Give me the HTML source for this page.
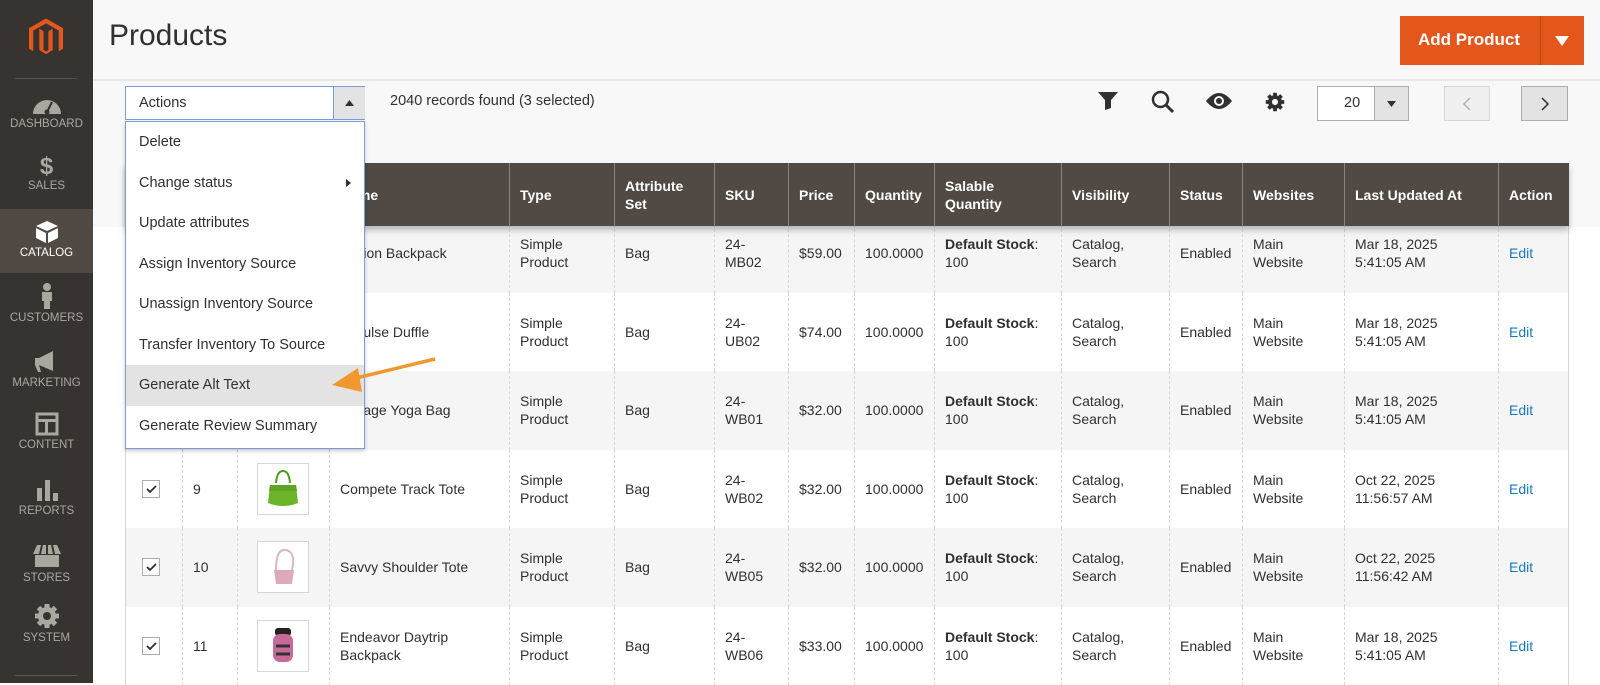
<!DOCTYPE html>
<html><head><meta charset="utf-8">
<style>
*{box-sizing:border-box;margin:0;padding:0}
body{width:1600px;height:683px;overflow:hidden;background:#fff;font-family:"Liberation Sans",sans-serif;color:#303030;position:relative;font-size:14px}
.side{position:absolute;left:0;top:0;width:93px;height:683px;background:#373330;z-index:5}
.side .sep{position:absolute;left:15px;width:62px;height:1px;background:#5a5450}
.nav{position:absolute;left:0;width:93px;text-align:center;color:#aaa6a0;font-size:11.5px;letter-spacing:0}
.nav svg{display:block;margin:0 auto 3px}
.nav.act{background:#514943;color:#fff}
.top{position:absolute;left:93px;top:0;width:1507px;height:227px;background:#f8f8f8}
.top .line{position:absolute;left:0;top:79px;width:100%;height:2px;background:#e8e8e8}
h1{position:absolute;left:109px;top:19px;font-size:30px;font-weight:normal;color:#303030}
.addbtn{position:absolute;left:1400px;top:16px;width:184px;height:49px;background:#e3571c;color:#fff;font-weight:bold;font-size:17px}
.addbtn span{position:absolute;left:18px;top:14px}
.addbtn i{position:absolute;left:140px;top:0;width:1px;height:49px;background:#b84510}
.sel{position:absolute;background:#fff;border:1px solid #adadad}
.abs{position:absolute}
table{border-collapse:collapse;table-layout:fixed;position:absolute;left:125px;width:1443px}
td,th{text-align:left;vertical-align:middle;padding:0 10px;line-height:18px;font-size:14px}
thead th{background:#514943;color:#fff;font-weight:bold;border-left:1px solid #8a837f;height:63px}
.hd{top:163px;z-index:3;box-shadow:0 4px 6px rgba(0,0,0,.25)}
.bd{top:214px;border-left:1px solid #d6d6d6;border-right:1px solid #d6d6d6}
.bd td{border-left:1px dashed #d6d6d6;height:78.5px}
.bd tr:nth-child(odd) td{background:#f5f5f5}
.cb{width:18px;height:18px;border:1px solid #adadad;background:#fff;margin-left:6px;position:relative}
.thumb{width:52px;height:52px;border:1px solid #d6d6d6;background:#fff;margin-left:9px;display:flex;align-items:center;justify-content:center}
.edit{color:#1979c3}
.menu{position:absolute;left:125px;top:121px;width:240px;height:328px;background:#fff;border:1px solid #7b9dd8;z-index:6;box-shadow:0 2px 4px rgba(0,0,0,.2)}
.menu div{height:40.5px;line-height:40.5px;padding-left:13px;font-size:14.5px;color:#303030;position:relative}
.menu .hl{background:#e3e3e3}
</style></head><body>
<div class="side">
<svg class="abs" style="left:29px;top:18px" width="34" height="41" viewBox="0 0 28 33"><path fill="#e3571c" d="M14 0L28 8v17l-3.5 2V10L14 4 3.5 10v17L0 25V8z M16 10.5l3.5-2V26L14 29.5 8.5 26V8.5l3.5 2V26l2 1.2 2-1.2z"/></svg>
<div class="sep" style="top:78px"></div>
<div class="nav" style="top:95px"><svg width="30" height="20" viewBox="0 0 30 20"><path fill="#aaa6a0" d="M1 19A14 14 0 0 1 29 19z"/><path stroke="#373330" stroke-width="2" d="M15 17L20 7"/><circle cx="15" cy="17" r="2.5" fill="#373330"/></svg>DASHBOARD</div>
<div class="nav" style="top:154px"><div style="font-size:24px;font-weight:bold;line-height:26px">$</div>SALES</div>
<div class="nav act" style="top:209px;height:64px;padding-top:11px"><svg width="24" height="24" viewBox="0 0 24 24"><path fill="#fff" d="M12 1L23 6 12 11 1 6z M1 8l10 5v10L1 18z M13 13l10-5v10l-10 5z"/></svg>CATALOG</div>
<div class="nav" style="top:283px"><svg width="14" height="26" viewBox="0 0 14 26"><circle cx="7" cy="4" r="4" fill="#aaa6a0"/><path fill="#aaa6a0" d="M2 9h10v9h-2v8H4v-8H2z"/></svg>CUSTOMERS</div>
<div class="nav" style="top:350px"><svg width="30" height="24" viewBox="0 0 30 24"><path fill="#aaa6a0" d="M3 8h4l14-7v20L7 15l2 7H6l-3-7z"/></svg>MARKETING</div>
<div class="nav" style="top:412px"><svg width="24" height="24" viewBox="0 0 24 24"><path fill="none" stroke="#aaa6a0" stroke-width="3" d="M2 2h20v20H2z"/><path fill="#aaa6a0" d="M2 7h20v3H2z M10 10h3v12h-3z"/></svg>CONTENT</div>
<div class="nav" style="top:478px"><svg width="24" height="24" viewBox="0 0 24 24"><path fill="#aaa6a0" d="M2 10h5v13H2z M10 2h5v21h-5z M18 15h5v8h-5z"/></svg>REPORTS</div>
<div class="nav" style="top:543px"><svg width="30" height="26" viewBox="0 0 30 26"><path fill="#aaa6a0" d="M5 2h20l4 9H1z M3 12h24v12H3z"/><path stroke="#373330" stroke-width="2" d="M10 2l-2 9M15 2v9M20 2l2 9"/></svg>STORES</div>
<div class="nav" style="top:603px"><svg width="26" height="26" viewBox="0 0 26 26"><circle cx="13" cy="13" r="9" fill="#aaa6a0"/><path stroke="#aaa6a0" stroke-width="5" d="M13 1v24M1 13h24M4.5 4.5l17 17M21.5 4.5l-17 17"/><circle cx="13" cy="13" r="4" fill="#373330"/></svg>SYSTEM</div>
<div class="sep" style="top:675px"></div>
</div>

<div class="top"><div class="line"></div></div>
<h1>Products</h1>
<div class="addbtn"><span>Add Product</span><i></i><svg class="abs" style="left:155px;top:20px" width="14" height="10"><path d="M0 0h14L7 10z" fill="#fff"/></svg></div>

<div class="sel" style="left:125px;top:86px;width:240px;height:34px;border-color:#7b9dd8">
<span class="abs" style="left:13px;top:8px;font-size:14.5px">Actions</span>
<div class="abs" style="left:207px;top:0;width:32px;height:32px;background:#e3e3e3;border-left:1px solid #7b9dd8"><svg class="abs" style="left:11px;top:13px" width="9" height="6"><path d="M0 6h9L4.5 0z" fill="#303030"/></svg></div>
</div>
<div class="abs" style="left:390px;top:93px;font-size:14.5px">2040 records found (3 selected)</div>

<svg class="abs" style="left:1098px;top:92px" width="20" height="18" viewBox="0 0 20 18"><path fill="#303030" d="M0 0h20l-7 8v8l-6 2V8z"/></svg>
<svg class="abs" style="left:1151px;top:90px" width="24" height="24" viewBox="0 0 24 24"><circle cx="9.5" cy="9.5" r="7.5" fill="none" stroke="#303030" stroke-width="2.5"/><path stroke="#303030" stroke-width="3" d="M15 15l7 7"/></svg>
<svg class="abs" style="left:1206px;top:93px" width="26" height="16" viewBox="0 0 26 16"><path fill="#303030" d="M0 8Q13 -8 26 8Q13 24 0 8z"/><circle cx="13" cy="8" r="5" fill="#f8f8f8"/><circle cx="13" cy="8" r="3" fill="#303030"/></svg>
<svg class="abs" style="left:1265px;top:92px" width="20" height="20" viewBox="0 0 26 26"><circle cx="13" cy="13" r="9" fill="#303030"/><path stroke="#303030" stroke-width="5" d="M13 1v24M1 13h24M4.5 4.5l17 17M21.5 4.5l-17 17"/><circle cx="13" cy="13" r="4" fill="#f8f8f8"/></svg>

<div class="sel" style="left:1317px;top:86px;width:92px;height:35px">
<span class="abs" style="left:26px;top:8px;font-size:14.5px">20</span>
<div class="abs" style="left:56px;top:0;width:34px;height:33px;background:#e3e3e3;border-left:1px solid #adadad"><svg class="abs" style="left:12px;top:14px" width="9" height="6"><path d="M0 0h9L4.5 6z" fill="#303030"/></svg></div>
</div>
<div class="abs" style="left:1444px;top:86px;width:46px;height:35px;background:#f0f0f0;border:1px solid #d6d6d6"><svg class="abs" style="left:17px;top:10px" width="10" height="14"><path d="M8 1L2 7l6 6" fill="none" stroke="#b0b0b0" stroke-width="1.5"/></svg></div>
<div class="abs" style="left:1521px;top:86px;width:47px;height:35px;background:#e3e3e3;border:1px solid #adadad"><svg class="abs" style="left:18px;top:10px" width="10" height="14"><path d="M2 1l6 6-6 6" fill="none" stroke="#303030" stroke-width="1.5"/></svg></div>

<table class="hd">
<colgroup><col style="width:57px"><col style="width:55px"><col style="width:92px"><col style="width:180px"><col style="width:105px"><col style="width:100px"><col style="width:74px"><col style="width:66px"><col style="width:80px"><col style="width:127px"><col style="width:108px"><col style="width:73px"><col style="width:102px"><col style="width:154px"><col style="width:70px"></colgroup>
<thead><tr><th></th><th>ID</th><th>Thumbnail</th><th>Name</th><th>Type</th><th>Attribute Set</th><th>SKU</th><th>Price</th><th>Quantity</th><th>Salable Quantity</th><th>Visibility</th><th>Status</th><th>Websites</th><th>Last Updated At</th><th>Action</th></tr></thead>
</table>

<table class="bd">
<colgroup><col style="width:57px"><col style="width:55px"><col style="width:92px"><col style="width:180px"><col style="width:105px"><col style="width:100px"><col style="width:74px"><col style="width:66px"><col style="width:80px"><col style="width:127px"><col style="width:108px"><col style="width:73px"><col style="width:102px"><col style="width:154px"><col style="width:70px"></colgroup>
<tbody>
<tr><td style="border-left:none"><div class="cb"></div></td><td>6</td><td><div class="thumb"></div></td><td>Fusion Backpack</td><td>Simple Product</td><td>Bag</td><td>24-<br>MB02</td><td>$59.00</td><td>100.0000</td><td><b>Default Stock</b>:<br>100</td><td>Catalog,<br>Search</td><td>Enabled</td><td>Main<br>Website</td><td>Mar 18, 2025<br>5:41:05 AM</td><td class="edit">Edit</td></tr>
<tr><td style="border-left:none"><div class="cb"></div></td><td>7</td><td><div class="thumb"></div></td><td>Impulse Duffle</td><td>Simple Product</td><td>Bag</td><td>24-<br>UB02</td><td>$74.00</td><td>100.0000</td><td><b>Default Stock</b>:<br>100</td><td>Catalog,<br>Search</td><td>Enabled</td><td>Main<br>Website</td><td>Mar 18, 2025<br>5:41:05 AM</td><td class="edit">Edit</td></tr>
<tr><td style="border-left:none"><div class="cb"></div></td><td>8</td><td><div class="thumb"></div></td><td>Voyage Yoga Bag</td><td>Simple Product</td><td>Bag</td><td>24-<br>WB01</td><td>$32.00</td><td>100.0000</td><td><b>Default Stock</b>:<br>100</td><td>Catalog,<br>Search</td><td>Enabled</td><td>Main<br>Website</td><td>Mar 18, 2025<br>5:41:05 AM</td><td class="edit">Edit</td></tr>
<tr><td style="border-left:none"><div class="cb"><svg class="abs" style="left:3px;top:4px" width="11" height="9"><path d="M1 4l3 3 6-6" fill="none" stroke="#303030" stroke-width="1.8"/></svg></div></td><td>9</td><td><div class="thumb"><svg width="34" height="40" viewBox="0 0 34 40"><path d="M10 14q1-12 7-12t7 12" fill="none" stroke="#4e9a1e" stroke-width="2"/><path d="M4 16h26l2 18q-15 6-30 0z" fill="#6cb42c"/><path d="M4 16h26l1 6H3z" fill="#5ea323"/></svg></div></td><td>Compete Track Tote</td><td>Simple Product</td><td>Bag</td><td>24-<br>WB02</td><td>$32.00</td><td>100.0000</td><td><b>Default Stock</b>:<br>100</td><td>Catalog,<br>Search</td><td>Enabled</td><td>Main<br>Website</td><td>Oct 22, 2025<br>11:56:57 AM</td><td class="edit">Edit</td></tr>
<tr><td style="border-left:none"><div class="cb"><svg class="abs" style="left:3px;top:4px" width="11" height="9"><path d="M1 4l3 3 6-6" fill="none" stroke="#303030" stroke-width="1.8"/></svg></div></td><td>10</td><td><div class="thumb"><svg width="30" height="42" viewBox="0 0 30 42"><path d="M8 24q0-22 10-20t6 20" fill="none" stroke="#d9b8c0" stroke-width="2"/><path d="M6 24h20l-2 14H8z" fill="#dcaab8"/></svg></div></td><td>Savvy Shoulder Tote</td><td>Simple Product</td><td>Bag</td><td>24-<br>WB05</td><td>$32.00</td><td>100.0000</td><td><b>Default Stock</b>:<br>100</td><td>Catalog,<br>Search</td><td>Enabled</td><td>Main<br>Website</td><td>Oct 22, 2025<br>11:56:42 AM</td><td class="edit">Edit</td></tr>
<tr><td style="border-left:none"><div class="cb"><svg class="abs" style="left:3px;top:4px" width="11" height="9"><path d="M1 4l3 3 6-6" fill="none" stroke="#303030" stroke-width="1.8"/></svg></div></td><td>11</td><td><div class="thumb"><svg width="26" height="40" viewBox="0 0 26 40"><rect x="5" y="2" width="16" height="8" rx="3" fill="#222"/><rect x="3" y="8" width="20" height="28" rx="7" fill="#c76a9a"/><path d="M6 20h14M6 28h14" stroke="#333" stroke-width="3"/></svg></div></td><td>Endeavor Daytrip<br>Backpack</td><td>Simple Product</td><td>Bag</td><td>24-<br>WB06</td><td>$33.00</td><td>100.0000</td><td><b>Default Stock</b>:<br>100</td><td>Catalog,<br>Search</td><td>Enabled</td><td>Main<br>Website</td><td>Mar 18, 2025<br>5:41:05 AM</td><td class="edit">Edit</td></tr>
</tbody></table>

<div class="menu">
<div>Delete</div>
<div>Change status<svg class="abs" style="left:220px;top:16px" width="5" height="8"><path d="M0 0l5 4-5 4z" fill="#303030"/></svg></div>
<div>Update attributes</div>
<div>Assign Inventory Source</div>
<div>Unassign Inventory Source</div>
<div>Transfer Inventory To Source</div>
<div class="hl">Generate Alt Text</div>
<div>Generate Review Summary</div>
</div>

<svg class="abs" style="left:0;top:0;z-index:7" width="1600" height="683"><path d="M435 359L352 379" stroke="#f0982f" stroke-width="3.5" fill="none"/><path d="M332 385L358 368L362 392z" fill="#f0982f"/></svg>
</body></html>
